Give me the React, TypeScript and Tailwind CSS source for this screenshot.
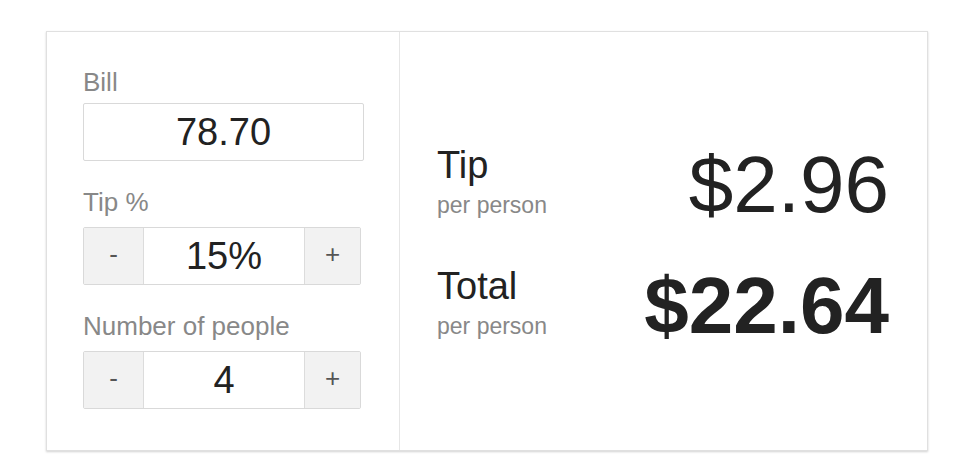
import React, { useState } from 'react';

const FONT = { fontFamily: '"Liberation Sans", Arial, Helvetica, sans-serif' };

function Stepper({ value, onDec, onInc }: { value: string; onDec: () => void; onInc: () => void }) {
  return (
    <div className="mt-[10px] flex h-[58px] w-[278px] border border-[#d9d9d9] rounded-[2px] overflow-hidden">
      <button
        onClick={onDec}
        className="w-[60px] shrink-0 bg-[#f2f2f2] border-r border-[#dcdcdc] text-[26px] text-[#555] flex items-center justify-center pb-[4px]"
      >
        -
      </button>
      <div className="w-[160px] shrink-0 bg-white flex items-center justify-center text-[38px] text-[#222] leading-none">
        {value}
      </div>
      <button
        onClick={onInc}
        className="flex-1 bg-[#f2f2f2] border-l border-[#dcdcdc] text-[26px] text-[#555] flex items-center justify-center pb-[4px]"
      >
        +
      </button>
    </div>
  );
}

function ResultRow({ title, amount, bold }: { title: string; amount: string; bold?: boolean }) {
  return (
    <div className="flex items-end justify-between">
      <div>
        <div className="text-[38px] leading-[44px] text-[#222]">{title}</div>
        <div className="mt-[4px] text-[23px] leading-[28px] text-[#888]">per person</div>
      </div>
      <div className={`text-[80px] leading-[68px] text-[#222] ${bold ? 'font-bold' : ''}`}>{amount}</div>
    </div>
  );
}

export default function App() {
  const [bill, setBill] = useState('78.70');
  const [tip, setTip] = useState(15);
  const [people, setPeople] = useState(4);

  // round tip up to the cent, like the original widget
  const amount = parseFloat(bill) || 0;
  const tipPer = Math.ceil(((amount * tip) / 100 / people) * 100 - 1e-9) / 100;
  const totalPer = Math.ceil((amount / people + tipPer) * 100 - 1e-9) / 100;

  return (
    <div className="min-h-[475px] w-[980px] bg-white pl-[46px] pt-[31px]" style={FONT}>
      <div className="flex h-[420px] w-[882px] border border-[#e0e0e0] bg-white shadow-[0_1px_2px_rgba(0,0,0,0.18)]">
        {/* ── Inputs ── */}
        <div className="w-[353px] shrink-0 border-r border-[#e6e6e6] pl-[36px] pt-[35px]">
          <div className="text-[26px] leading-[30px] text-[#888]">Bill</div>
          <input
            value={bill}
            onChange={(e) => setBill(e.target.value)}
            className="mt-[6px] block h-[58px] w-[281px] border border-[#d9d9d9] rounded-[2px] bg-white text-center text-[38px] text-[#222] outline-none"
          />

          <div className="mt-[26px] text-[26px] leading-[30px] text-[#888]">Tip %</div>
          <Stepper
            value={`${tip}%`}
            onDec={() => setTip(Math.max(0, tip - 1))}
            onInc={() => setTip(tip + 1)}
          />

          <div className="mt-[26px] text-[26px] leading-[30px] text-[#888]">Number of people</div>
          <Stepper
            value={String(people)}
            onDec={() => setPeople(Math.max(1, people - 1))}
            onInc={() => setPeople(people + 1)}
          />
        </div>

        {/* ── Results ── */}
        <div className="flex flex-1 flex-col justify-center gap-[45px] pl-[37px] pr-[38px]">
          <ResultRow title="Tip" amount={`$${tipPer.toFixed(2)}`} />
          <ResultRow title="Total" amount={`$${totalPer.toFixed(2)}`} bold />
        </div>
      </div>
    </div>
  );
}
